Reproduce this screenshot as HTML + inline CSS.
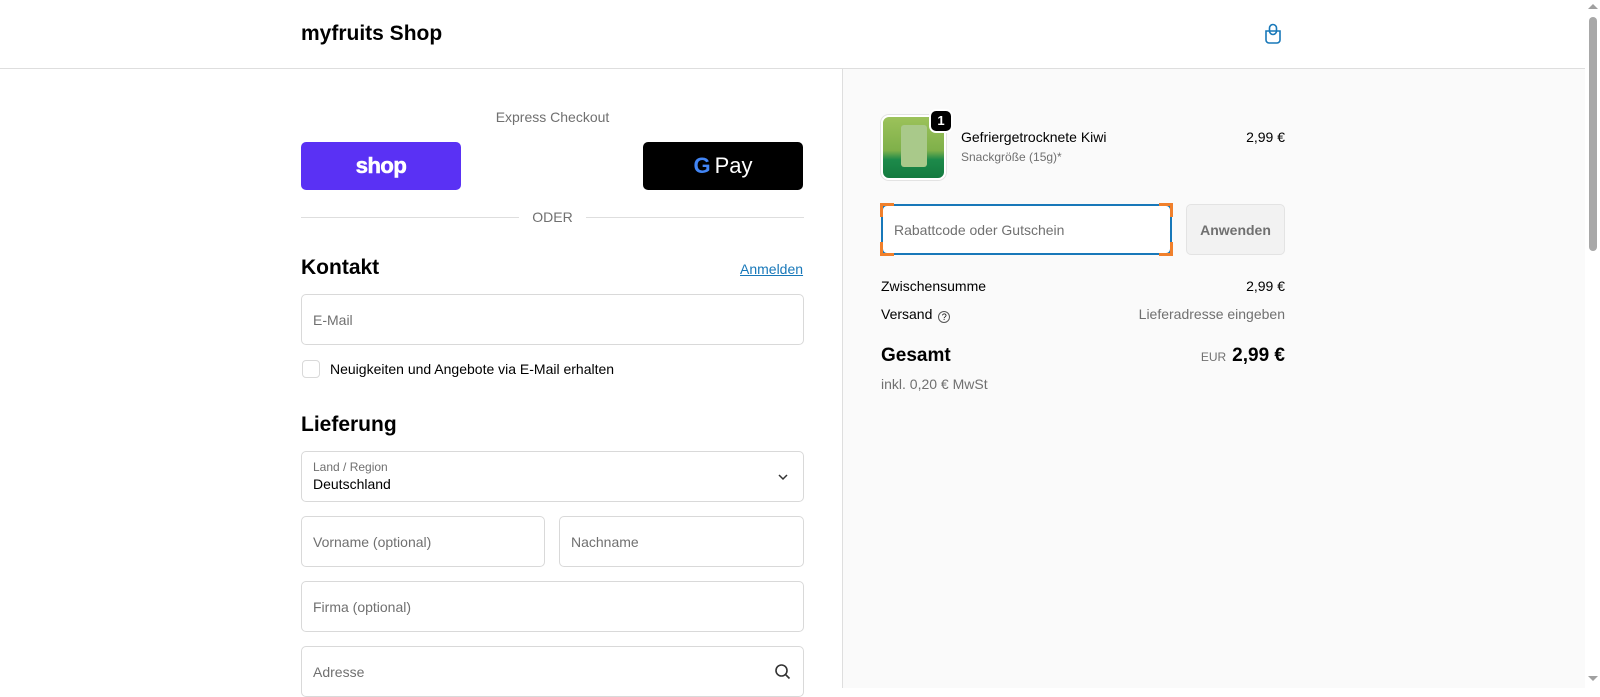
<!DOCTYPE html>
<html><head><meta charset="utf-8"><style>
*{box-sizing:border-box;margin:0;padding:0}
body{width:1600px;height:688px;overflow:hidden;font-family:"Liberation Sans",sans-serif;color:#000;background:#fff;position:relative}
.a{position:absolute}
.hdr{left:0;top:0;width:1585px;height:69px;border-bottom:1px solid #dedede;background:#fff}
.right{left:842px;top:69px;width:743px;height:619px;background:#fafafa;border-left:1px solid #dedede}
.inp{position:absolute;border:1px solid #d9d9d9;border-radius:5px;background:#fff;font-size:14px;color:#707070;padding-left:11px;display:flex;align-items:center}
.sb{left:1585px;top:0;width:15px;height:688px;background:#fff}
.c{position:absolute;width:14px;height:14px;border-color:#f0802c;border-style:solid;border-width:0}
</style></head><body>
<div class="a hdr"></div>
<div class="a" style="left:301px;top:22px;font-size:21px;font-weight:bold">myfruits Shop</div>
<svg class="a" style="left:1263px;top:23px" width="20" height="22" viewBox="0 0 20 22" fill="none" stroke="#1878b9" stroke-width="1.6"><path d="M3 8h14l0 9a3 3 0 0 1-3 3H6a3 3 0 0 1-3-3z"/><path d="M6.5 8V5a3.5 3.5 0 0 1 7 0v3"/><path d="M6.5 8a3.5 3.5 0 0 0 7 0"/></svg>
<div class="a right"></div>
<div class="a" style="left:301px;width:503px;top:109px;text-align:center;font-size:14px;color:#707070">Express Checkout</div>
<div class="a" style="left:301px;top:142px;width:160px;height:48px;background:#5a31f4;border-radius:5px;color:#fff;font-weight:bold;font-size:22px;display:flex;align-items:center;justify-content:center;letter-spacing:-0.5px;-webkit-text-stroke:0.6px #fff">shop</div>
<div class="a" style="left:643px;top:142px;width:160px;height:48px;background:#000;border-radius:5px;color:#fff;font-size:22px;display:flex;align-items:center;justify-content:center"><span style="font-weight:bold;color:#4285f4;margin-right:4px">G</span>Pay</div>
<div class="a" style="left:301px;top:217px;width:218px;border-top:1px solid #dedede"></div>
<div class="a" style="left:586px;top:217px;width:218px;border-top:1px solid #dedede"></div>
<div class="a" style="left:519px;width:67px;top:209px;text-align:center;font-size:14px;color:#707070">ODER</div>
<div class="a" style="left:301px;top:256px;font-size:21px;font-weight:bold">Kontakt</div>
<div class="a" style="left:740px;top:261px;font-size:14px;color:#1878b9;text-decoration:underline">Anmelden</div>
<div class="inp" style="left:301px;top:294px;width:503px;height:51px">E-Mail</div>
<div class="a" style="left:302px;top:360px;width:18px;height:18px;border:1px solid #d9d9d9;border-radius:4px;background:#fff"></div>
<div class="a" style="left:330px;top:361px;font-size:14px">Neuigkeiten und Angebote via E-Mail erhalten</div>
<div class="a" style="left:301px;top:413px;font-size:21px;font-weight:bold">Lieferung</div>
<div class="inp" style="left:301px;top:451px;width:503px;height:51px;display:block;padding-top:8px"><div style="font-size:12px">Land / Region</div><div style="color:#000;font-size:14px;margin-top:2px">Deutschland</div></div>
<svg class="a" style="left:777px;top:472px" width="12" height="10" viewBox="0 0 12 10" fill="none" stroke="#333" stroke-width="1.5"><path d="M2 3l4 4 4-4"/></svg>
<div class="inp" style="left:301px;top:516px;width:244px;height:51px">Vorname (optional)</div>
<div class="inp" style="left:559px;top:516px;width:245px;height:51px">Nachname</div>
<div class="inp" style="left:301px;top:581px;width:503px;height:51px">Firma (optional)</div>
<div class="inp" style="left:301px;top:646px;width:503px;height:51px">Adresse</div>
<svg class="a" style="left:774px;top:663px" width="18" height="18" viewBox="0 0 18 18" fill="none" stroke="#333" stroke-width="1.6"><circle cx="7.5" cy="7.5" r="5.5"/><path d="M11.5 11.5l4 4"/></svg>

<div class="a" style="left:881px;top:115px;width:65px;height:65px;border-radius:8px;border:2px solid #fff;box-shadow:0 0 0 1px #e3e3e3;background:linear-gradient(#9cc25a 0%,#7fb04a 55%,#1d8a4a 70%,#137a3f 100%);overflow:hidden"><div style="margin:8px auto 0;width:26px;height:42px;background:#a9c98a;border-radius:3px"></div></div>
<div class="a" style="left:929px;top:109px;width:24px;height:24px;background:#000;border:2px solid #fff;border-radius:7px;color:#fff;font-size:13px;font-weight:bold;text-align:center;line-height:20px">1</div>
<div class="a" style="left:961px;top:129px;font-size:14px">Gefriergetrocknete Kiwi</div>
<div class="a" style="left:961px;top:150px;font-size:12px;color:#707070">Snackgröße (15g)*</div>
<div class="a" style="left:1185px;width:100px;text-align:right;top:129px;font-size:14px">2,99 €</div>
<div class="inp" style="left:881px;top:204px;width:291px;height:51px;border:2px solid #1878b9;border-radius:6px">Rabattcode oder Gutschein</div>
<div class="c" style="left:880px;top:203px;border-top-width:3px;border-left-width:3px"></div>
<div class="c" style="left:1159px;top:203px;border-top-width:3px;border-right-width:3px"></div>
<div class="c" style="left:880px;top:242px;border-bottom-width:3px;border-left-width:3px"></div>
<div class="c" style="left:1159px;top:242px;border-bottom-width:3px;border-right-width:3px"></div>
<div class="a" style="left:1186px;top:204px;width:99px;height:51px;border:1px solid #e3e3e3;border-radius:5px;background:#f2f2f2;color:#707070;font-weight:bold;font-size:14px;display:flex;align-items:center;justify-content:center">Anwenden</div>
<div class="a" style="left:881px;top:278px;font-size:14px">Zwischensumme</div>
<div class="a" style="left:1185px;width:100px;text-align:right;top:278px;font-size:14px">2,99 €</div>
<div class="a" style="left:881px;top:306px;font-size:14px">Versand <span style="display:inline-block;width:12px;height:12px;border:1px solid #555;border-radius:50%;font-size:9px;text-align:center;line-height:10px;vertical-align:-1px;margin-left:2px">?</span></div>
<div class="a" style="left:1085px;width:200px;text-align:right;top:306px;font-size:14px;color:#707070">Lieferadresse eingeben</div>
<div class="a" style="left:881px;top:345px;font-size:19px;font-weight:bold">Gesamt</div>
<div class="a" style="left:1085px;width:200px;text-align:right;top:345px;font-size:19px;font-weight:bold"><span style="font-size:12px;font-weight:normal;color:#707070;margin-right:6px">EUR</span>2,99 €</div>
<div class="a" style="left:881px;top:376px;font-size:14px;color:#707070">inkl. 0,20 € MwSt</div>

<div class="a sb"></div>
<div class="a" style="left:1589px;top:17px;width:8px;height:234px;background:#a8a8a8;border-radius:4px"></div>
<div class="a" style="left:1588px;top:4px;width:0;height:0;border-left:5px solid transparent;border-right:5px solid transparent;border-bottom:5px solid #a0a0a0"></div>
<div class="a" style="left:1588px;top:676px;width:0;height:0;border-left:5px solid transparent;border-right:5px solid transparent;border-top:5px solid #a0a0a0"></div>
</body></html>
